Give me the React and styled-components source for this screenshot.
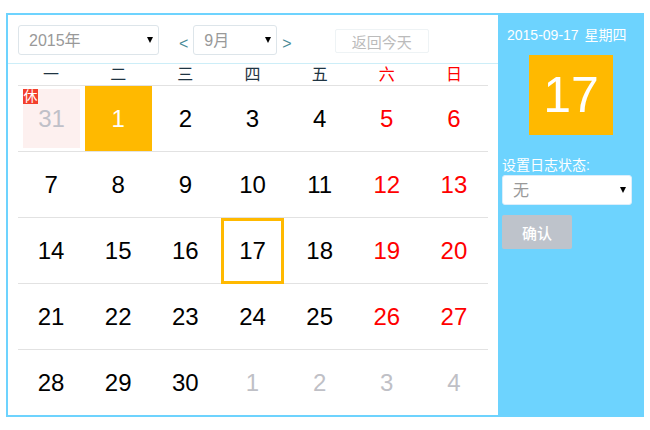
import React from "react";
import styled, { createGlobalStyle } from "styled-components";

const Global = createGlobalStyle`
  html, body { margin: 0; padding: 0; background: #fff; }
  body { font-family: "Liberation Sans", "Noto Sans CJK SC", sans-serif; }
  * { box-sizing: border-box; }
`;

const Page = styled.div`
  width: 650px;
  height: 430px;
  padding: 13px 6px 13px 6px;
`;
const Calendar = styled.div`
  display: flex;
  width: 638px;
  height: 404px;
  border: 2px solid #6dd3fe;
  border-right-width: 0;
  background: #fff;
`;
const Main = styled.div`
  width: 490px;
  display: flex;
  flex-direction: column;
`;
const Toolbar = styled.div`
  height: 49px;
  flex: none;
  display: flex;
  align-items: center;
  padding: 2px 0 0 10px;
  border-bottom: 1px solid #cdeef8;
`;
const SelectWrap = styled.div`
  position: relative;
  width: ${(p) => p.$w}px;
  height: 30px;
  flex: none;
  &::after {
    content: "";
    position: absolute;
    right: 6px;
    top: 12px;
    border-left: 3px solid transparent;
    border-right: 3px solid transparent;
    border-top: 6px solid #000;
    pointer-events: none;
  }
`;
const Select = styled.select`
  appearance: none;
  width: 100%;
  height: 100%;
  border: 1px solid ${(p) => p.$border || "#dde5ea"};
  border-radius: 3px;
  background: #fff;
  color: #999;
  font: 16px "Liberation Sans", "Noto Sans CJK SC", sans-serif;
  padding: 0 0 0 10px;
  outline: none;
`;
const Nav = styled.span`
  flex: none;
  font-size: 16px;
  color: #4a8a96;
  margin: ${(p) => p.$m};
  padding-top: 7px;
  line-height: 18px;
`;
const TodayButton = styled.button`
  flex: none;
  width: 94px;
  height: 24px;
  margin: 2px 0 0 43px;
  border: 1px solid #eef3f5;
  border-radius: 2px;
  background: #fff;
  color: #bbb;
  font: 15px "Liberation Sans", "Noto Sans CJK SC", sans-serif;
  padding: 0;
`;
const Grid = styled.div`
  width: 470px;
  margin-left: 10px;
`;
const WeekRow = styled.div`
  display: grid;
  grid-template-columns: repeat(7, 1fr);
  height: 22px;
  border-bottom: 1px solid #e2e2e2;
`;
const WeekDay = styled.div`
  text-align: center;
  font-size: 16px;
  line-height: 21px;
  padding-right: 1px;
  color: ${(p) => (p.$end ? "#f00" : "#1f3442")};
`;
const Row = styled.div`
  display: grid;
  grid-template-columns: repeat(7, 1fr);
  height: 66px;
  border-bottom: ${(p) => (p.$last ? "0" : "1px solid #e2e2e2")};
`;
const Cell = styled.div`
  position: relative;
  display: flex;
  align-items: center;
  justify-content: center;
  font-size: 24px;
  padding-right: 1px;
  color: ${(p) => p.$color};
  background: ${(p) => p.$bg || "transparent"};
  height: 65px;
  ${(p) => p.$rest && "margin: 3px 5px 3px 5px; height: 59px; padding-right: 0;"}
  ${(p) => p.$today && "border: 3px solid #ffb900; margin: 0 3px 0 2px; height: 66px; padding-right: 0;"}
`;
const RestBadge = styled.span`
  position: absolute;
  left: 0;
  top: 0;
  width: 15px;
  height: 15px;
  background: #f33f2c;
  color: #fff;
  font-size: 14px;
  line-height: 15px;
  text-align: center;
`;
const Side = styled.div`
  width: 146px;
  flex: none;
  margin-top: -2px;
  margin-bottom: -2px;
  background: #6dd3fe;
  color: #fff;
  display: flex;
  flex-direction: column;
  padding: 0 12px 0 4px;
`;
const SideDate = styled.div`
  font-size: 14px;
  line-height: 16px;
  margin-top: 14px;
  margin-left: 5px;
  word-spacing: 2px;
  white-space: pre;
`;
const BigDay = styled.div`
  width: 84px;
  height: 80px;
  margin: 12px 0 0 27px;
  background: #ffb900;
  font-size: 50px;
  line-height: 80px;
  text-align: center;
`;
const Label = styled.div`
  font-size: 14px;
  line-height: 16px;
  margin-top: 22px;
`;
const SideSelect = styled(SelectWrap)`
  margin-top: 2px;
`;
const Confirm = styled.button`
  width: 70px;
  height: 34px;
  margin-top: 10px;
  border: 0;
  border-radius: 2px;
  background: #bec3cb;
  color: #fff;
  font: 500 15px "Liberation Sans", "Noto Sans CJK SC", sans-serif;
  padding: 0;
`;

const weeks = [
  [31, 1, 2, 3, 4, 5, 6],
  [7, 8, 9, 10, 11, 12, 13],
  [14, 15, 16, 17, 18, 19, 20],
  [21, 22, 23, 24, 25, 26, 27],
  [28, 29, 30, 1, 2, 3, 4],
];
const names = ["一", "二", "三", "四", "五", "六", "日"];

function DayCell({ day, r, c }) {
  const other = (r === 0 && c === 0) || (r === 4 && c > 2);
  if (r === 0 && c === 0)
    return (
      <Cell $rest $bg="#fdf0ef" $color="#c0c0c8">
        <RestBadge>休</RestBadge>
        {day}
      </Cell>
    );
  if (r === 0 && c === 1) return <Cell $bg="#ffb900" $color="#fff">{day}</Cell>;
  if (r === 2 && c === 3) return <Cell $today $color="#000">{day}</Cell>;
  return <Cell $color={other ? "#bfc0c6" : c > 4 ? "#f00" : "#000"}>{day}</Cell>;
}

export default function App() {
  return (
    <Page>
      <Global />
      <Calendar>
        <Main>
          <Toolbar>
            <SelectWrap $w={141}>
              <Select defaultValue="2015年"><option>2015年</option></Select>
            </SelectWrap>
            <Nav $m="0 5px 0 20px">&lt;</Nav>
            <SelectWrap $w={84}>
              <Select defaultValue="9月"><option>9月</option></Select>
            </SelectWrap>
            <Nav $m="0 0 0 5px">&gt;</Nav>
            <TodayButton>返回今天</TodayButton>
          </Toolbar>
          <Grid>
            <WeekRow>
              {names.map((n, i) => <WeekDay key={n} $end={i > 4}>{n}</WeekDay>)}
            </WeekRow>
            {weeks.map((w, r) => (
              <Row key={r} $last={r === 4}>
                {w.map((d, c) => <DayCell key={c} day={d} r={r} c={c} />)}
              </Row>
            ))}
          </Grid>
        </Main>
        <Side>
          <SideDate>2015-09-17 星期四</SideDate>
          <BigDay>17</BigDay>
          <Label>设置日志状态:</Label>
          <SideSelect $w={130}>
            <Select $border="#dbeefb" defaultValue="无"><option>无</option></Select>
          </SideSelect>
          <Confirm>确认</Confirm>
        </Side>
      </Calendar>
    </Page>
  );
}
